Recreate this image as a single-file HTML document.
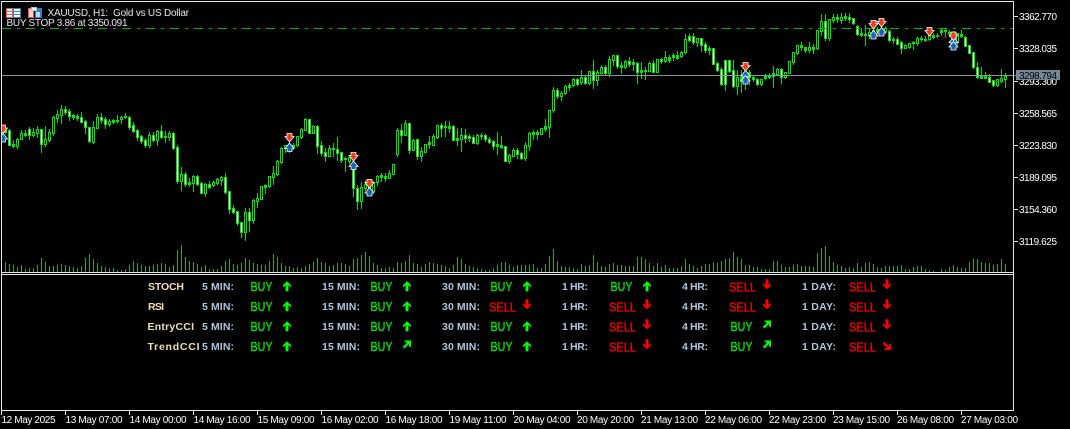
<!DOCTYPE html>
<html><head><meta charset="utf-8"><title>XAUUSD H1</title>
<style>html,body{margin:0;padding:0;background:#000;width:1070px;height:429px;overflow:hidden}svg{display:block}
text{font-family:"Liberation Sans",sans-serif}
.a{font-size:10px;fill:#fff}.l{font-size:10.5px;font-weight:bold;fill:#b0c4de}.n{font-size:10.5px;font-weight:bold;fill:#eedfb0}.b{font-size:13px;fill:#00ee00;stroke:#00ee00;stroke-width:.3px}.s{font-size:13px;fill:#f00;stroke:#f00;stroke-width:.3px}
</style></head><body>
<svg width="1070" height="429" viewBox="0 0 1070 429" xmlns="http://www.w3.org/2000/svg">
<defs>
<polygon id="u" fill="#00ff00" points="0,-5 4,-1 4,1 1.5,-1 1.5,5 -1.5,5 -1.5,-1 -4,1 -4,-1"/>
<polygon id="d" fill="#ff0000" points="0,5 4,1 4,-1 1.5,1 1.5,-5 -1.5,-5 -1.5,1 -4,-1 -4,1"/>
<polygon id="r" fill="#00ff00" points="-3,-4.5 4,-4.5 4,2.5 2,1 2,-1 -2.5,3.5 -4.2,1.8 0,-2 -1.5,-2.8"/>
<polygon id="e" fill="#ff0000" points="-3,4.5 4,4.5 4,-2.5 2,-1 2,1 -2.5,-3.5 -4.2,-1.8 0,2 -1.5,2.8"/>
<polygon id="R" fill="#e8401c" stroke="#fff" stroke-width=".8" points="-2.5,-4 2.5,-4 2.5,-1 4.5,-1 0,4.5 -4.5,-1 -2.5,-1"/>
<polygon id="B" fill="#1464b4" stroke="#fff" stroke-width=".8" points="-2.5,4 2.5,4 2.5,1 4.5,1 0,-4.5 -4.5,1 -2.5,1"/>
<clipPath id="c"><rect x="2" y="2" width="1011" height="270"/></clipPath>
</defs>
<rect width="1070" height="429" fill="#000"/>
<g clip-path="url(#c)">
<path shape-rendering="crispEdges" stroke="#2fa52f" stroke-width="1" fill="none" d="M5.5 262v10M9.5 264v8M13.5 265v7M17.5 267v5M21.5 265v7M25.5 269v3M29.5 268v4M33.5 268v4M37.5 265v7M41.5 258v14M45.5 262v10M49.5 266v6M53.5 266v6M57.5 265v7M61.5 264v8M65.5 265v7M69.5 266v6M73.5 267v5M77.5 268v4M81.5 266v6M85.5 258v14M89.5 254v18M93.5 259v13M97.5 263v9M101.5 266v6M105.5 267v5M109.5 268v4M113.5 268v4M117.5 270v2M121.5 270v2M125.5 269v3M129.5 265v7M133.5 261v11M137.5 263v9M141.5 265v7M145.5 266v6M149.5 266v6M153.5 265v7M157.5 264v8M161.5 263v9M165.5 264v8M169.5 267v5M173.5 265v7M177.5 250v22M181.5 245v27M185.5 257v15M189.5 261v11M193.5 262v10M197.5 264v8M201.5 267v5M205.5 265v7M209.5 269v3M213.5 269v3M217.5 269v3M221.5 266v6M225.5 261v11M229.5 259v13M233.5 264v8M237.5 265v7M241.5 263v9M245.5 258v14M249.5 260v12M253.5 263v9M257.5 264v8M261.5 265v7M265.5 265v7M269.5 261v11M273.5 254v18M277.5 257v15M281.5 263v9M285.5 266v6M289.5 266v6M293.5 268v4M297.5 267v5M301.5 268v4M305.5 266v6M309.5 264v8M313.5 262v10M317.5 258v14M321.5 262v10M325.5 263v9M329.5 266v6M333.5 265v7M337.5 263v9M341.5 263v9M345.5 264v8M349.5 266v6M353.5 259v13M357.5 258v14M361.5 255v17M365.5 252v20M369.5 256v16M373.5 263v9M377.5 265v7M381.5 268v4M385.5 268v4M389.5 267v5M393.5 268v4M397.5 262v10M401.5 263v9M405.5 261v11M409.5 255v17M413.5 263v9M417.5 264v8M421.5 267v5M425.5 264v8M429.5 262v10M433.5 263v9M437.5 264v8M441.5 265v7M445.5 266v6M449.5 268v4M453.5 265v7M457.5 257v15M461.5 259v13M465.5 264v8M469.5 266v6M473.5 267v5M477.5 268v4M481.5 269v3M485.5 270v2M489.5 270v2M493.5 268v4M497.5 265v7M501.5 262v10M505.5 262v10M509.5 265v7M513.5 267v5M517.5 265v7M521.5 265v7M525.5 265v7M529.5 265v7M533.5 264v8M537.5 268v4M541.5 268v4M545.5 264v8M549.5 256v16M553.5 249v23M557.5 261v11M561.5 266v6M565.5 267v5M569.5 267v5M573.5 268v4M577.5 269v3M581.5 264v8M585.5 266v6M589.5 265v7M593.5 255v17M597.5 262v10M601.5 266v6M605.5 267v5M609.5 264v8M613.5 263v9M617.5 265v7M621.5 265v7M625.5 266v6M629.5 266v6M633.5 266v6M637.5 257v15M641.5 257v15M645.5 259v13M649.5 263v9M653.5 266v6M657.5 263v9M661.5 267v5M665.5 265v7M669.5 268v4M673.5 268v4M677.5 268v4M681.5 266v6M685.5 259v13M689.5 264v8M693.5 266v6M697.5 268v4M701.5 266v6M705.5 264v8M709.5 264v8M713.5 262v10M717.5 263v9M721.5 261v11M725.5 259v13M729.5 258v14M733.5 252v20M737.5 257v15M741.5 259v13M745.5 265v7M749.5 265v7M753.5 267v5M757.5 267v5M761.5 269v3M765.5 269v3M769.5 269v3M773.5 261v11M777.5 261v11M781.5 265v7M785.5 267v5M789.5 267v5M793.5 265v7M797.5 264v8M801.5 266v6M805.5 266v6M809.5 266v6M813.5 267v5M817.5 253v19M821.5 248v24M825.5 246v26M829.5 256v16M833.5 262v10M837.5 265v7M841.5 266v6M845.5 268v4M849.5 267v5M853.5 268v4M857.5 263v9M861.5 267v5M865.5 263v9M869.5 262v10M873.5 264v8M877.5 267v5M881.5 268v4M885.5 266v6M889.5 266v6M893.5 266v6M897.5 266v6M901.5 265v7M905.5 269v3M909.5 269v3M913.5 267v5M917.5 266v6M921.5 266v6M925.5 269v3M929.5 270v2M933.5 271v1M941.5 269v3M945.5 270v2M949.5 267v5M953.5 265v7M957.5 267v5M961.5 268v4M965.5 268v4M969.5 262v10M973.5 259v13M977.5 259v13M981.5 262v10M985.5 263v9M989.5 263v9M993.5 265v7M997.5 264v8M1001.5 259v13M1005.5 264v8"/>
<path shape-rendering="crispEdges" stroke="#00dc00" stroke-width="1" fill="none" d="M5.5 127V134M9.5 129V146M13.5 140V148M17.5 138V149M21.5 130V140M25.5 130V137M29.5 127V140M33.5 128V137M37.5 126V138M41.5 129V153M45.5 126V147M49.5 129V142M53.5 116V136M57.5 110V123M61.5 105V124M65.5 106V115M69.5 109V121M73.5 114V120M77.5 114V121M81.5 112V123M85.5 120V134M89.5 127V143M93.5 121V144M97.5 114V129M101.5 113V124M105.5 117V129M109.5 119V127M113.5 119V124M117.5 115V124M121.5 116V124M125.5 113V119M129.5 116V130M133.5 122V133M137.5 129V141M141.5 135V144M145.5 138V148M149.5 132V148M153.5 132V142M157.5 130V146M161.5 125V139M165.5 131V143M169.5 131V141M173.5 132V150M177.5 145V184M181.5 167V191M185.5 172V187M189.5 178V187M193.5 175V192M197.5 175V186M201.5 182V194M205.5 183V197M209.5 181V189M213.5 181V187M217.5 178V185M221.5 176V186M225.5 173V194M229.5 191V214M233.5 205V214M237.5 211V226M241.5 222V238M245.5 208V241M249.5 208V232M253.5 199V224M257.5 193V208M261.5 186V200M265.5 184V194M269.5 176V188M273.5 166V185M277.5 160V176M281.5 147V164M285.5 145V153M289.5 144V153M293.5 143V150M297.5 136V147M301.5 128V139M305.5 118V131M309.5 119V134M313.5 125V134M317.5 125V154M321.5 141V156M325.5 148V162M329.5 145V157M333.5 143V157M337.5 137V161M341.5 152V163M345.5 157V172M349.5 157V164M353.5 160V197M357.5 185V210M361.5 182V209M365.5 180V191M369.5 182V192M373.5 181V193M377.5 175V186M381.5 173V182M385.5 173V182M389.5 170V179M393.5 164V175M397.5 128V157M401.5 124V143M405.5 120V136M409.5 123V154M413.5 139V151M417.5 139V160M421.5 147V162M425.5 144V153M429.5 136V149M433.5 134V146M437.5 125V139M441.5 123V137M445.5 121V137M449.5 121V133M453.5 125V141M457.5 128V146M461.5 128V152M465.5 129V143M469.5 134V142M473.5 135V144M477.5 134V145M481.5 133V140M485.5 134V142M489.5 137V144M493.5 140V150M497.5 132V155M501.5 136V149M505.5 146V162M509.5 154V164M513.5 148V157M517.5 148V159M521.5 152V160M525.5 142V161M529.5 132V151M533.5 130V140M537.5 130V140M541.5 128V135M545.5 119V132M549.5 110V138M553.5 87V113M557.5 88V99M561.5 91V101M565.5 85V95M569.5 83V91M573.5 78V87M577.5 78V86M581.5 70V85M585.5 76V85M589.5 71V85M593.5 60V89M597.5 70V86M601.5 65V75M605.5 65V76M609.5 56V77M613.5 55V66M617.5 55V69M621.5 62V74M625.5 60V69M629.5 57V67M633.5 59V71M637.5 62V84M641.5 62V79M645.5 67V80M649.5 62V72M653.5 60V73M657.5 59V73M661.5 58V64M665.5 51V63M669.5 55V63M673.5 53V61M677.5 51V60M681.5 51V58M685.5 34V54M689.5 34V42M693.5 33V45M697.5 38V47M701.5 38V52M705.5 42V53M709.5 46V55M713.5 48V65M717.5 62V72M721.5 67V86M725.5 60V91M729.5 60V73M733.5 60V88M737.5 70V95M741.5 70V93M745.5 70V90M749.5 70V85M753.5 75V82M757.5 78V86M761.5 79V86M765.5 74V80M769.5 73V79M773.5 66V88M777.5 68V76M781.5 68V84M785.5 72V79M789.5 61V74M793.5 52V65M797.5 45V55M801.5 42V51M805.5 47V53M809.5 42V53M813.5 44V54M817.5 30V50M821.5 14V36M825.5 14V41M829.5 19V41M833.5 14V23M837.5 14V23M841.5 13V24M845.5 13V21M849.5 13V23M853.5 18V25M857.5 25V36M861.5 28V37M865.5 25V46M869.5 28V39M873.5 28V37M877.5 27V34M881.5 27V36M885.5 26V33M889.5 30V42M893.5 37V44M897.5 37V45M901.5 41V54M905.5 44V49M909.5 43V49M913.5 41V50M917.5 37V46M921.5 36V42M925.5 36V42M929.5 32V41M933.5 33V39M937.5 33V38M941.5 28V36M945.5 28V36M949.5 30V37M953.5 31V40M957.5 33V45M961.5 30V38M965.5 36V47M969.5 45V54M973.5 52V69M977.5 62V79M981.5 67V79M985.5 72V79M989.5 74V83M993.5 80V87M997.5 79V87M1001.5 69V83M1005.5 73V88"/>
<path shape-rendering="crispEdges" stroke="#00e800" stroke-width="3" fill="none" d="M5.5 130V133M9.5 130V146M13.5 144V147M17.5 139V147M21.5 133V140M25.5 133V136M29.5 129V136M33.5 132V136M37.5 129V134M41.5 129V145M45.5 139V145M49.5 132V141M53.5 117V134M57.5 114V119M61.5 109V116M65.5 109V113M69.5 111V117M73.5 115V118M77.5 116V119M81.5 117V123M85.5 121V128M89.5 127V142M93.5 127V143M97.5 117V129M101.5 117V121M105.5 119V125M109.5 121V125M113.5 120V123M117.5 120V122M121.5 117V120M125.5 116V118M129.5 117V128M133.5 125V132M137.5 130V138M141.5 136V142M145.5 140V146M149.5 135V146M153.5 135V141M157.5 131V141M161.5 131V138M165.5 136V138M169.5 133V138M173.5 133V149M177.5 147V182M181.5 174V182M185.5 174V185M189.5 182V185M193.5 176V184M197.5 176V185M201.5 183V194M205.5 184V194M209.5 184V188M213.5 182V186M217.5 179V184M221.5 177V181M225.5 177V193M229.5 191V210M233.5 208V213M237.5 211V224M241.5 222V233M245.5 212V233M249.5 212V221M253.5 200V221M257.5 198V202M261.5 186V200M265.5 185V188M269.5 176V187M273.5 173V178M277.5 161V175M281.5 148V163M285.5 145V149M289.5 146V151M293.5 145V148M297.5 136V146M301.5 129V138M305.5 119V131M309.5 119V134M313.5 126V134M317.5 126V147M321.5 145V154M325.5 152V157M329.5 148V157M333.5 148V150M337.5 149V154M341.5 152V161M345.5 158V160M349.5 157V162M353.5 168V189M357.5 188V202M361.5 187V202M365.5 184V189M369.5 184V191M373.5 182V192M377.5 176V183M381.5 175V178M385.5 176V179M389.5 173V179M393.5 164V175M397.5 130V155M401.5 130V136M405.5 123V136M409.5 123V151M413.5 140V151M417.5 139V157M421.5 151V157M425.5 144V153M429.5 142V145M433.5 136V146M437.5 125V138M441.5 125V129M445.5 126V128M449.5 126V129M453.5 126V141M457.5 138V141M461.5 135V140M465.5 135V139M469.5 136V139M473.5 137V144M477.5 135V144M481.5 135V137M485.5 135V140M489.5 139V143M493.5 141V147M497.5 144V147M501.5 145V148M505.5 146V162M509.5 155V162M513.5 150V157M517.5 150V155M521.5 153V159M525.5 145V159M529.5 133V147M533.5 132V135M537.5 132V135M541.5 128V135M545.5 126V130M549.5 110V128M553.5 90V111M557.5 90V97M561.5 93V97M565.5 86V94M569.5 85V88M573.5 79V86M577.5 79V85M581.5 77V83M585.5 77V84M589.5 71V84M593.5 71V81M597.5 72V81M601.5 67V74M605.5 67V74M609.5 59V74M613.5 55V61M617.5 55V67M621.5 65V68M625.5 61V68M629.5 61V65M633.5 62V65M637.5 63V73M641.5 70V73M645.5 70V72M649.5 63V72M653.5 63V73M657.5 59V73M661.5 59V62M665.5 57V62M669.5 57V61M673.5 55V58M677.5 55V59M681.5 52V57M685.5 39V53M689.5 36V41M693.5 36V43M697.5 38V43M701.5 38V46M705.5 44V51M709.5 48V51M713.5 48V65M717.5 63V71M721.5 69V85M725.5 60V85M729.5 60V72M733.5 70V87M737.5 77V87M741.5 77V82M745.5 72V79M749.5 72V78M753.5 77V80M757.5 79V85M761.5 79V85M765.5 76V79M769.5 75V78M773.5 73V77M777.5 69V75M781.5 69V78M785.5 72V78M789.5 61V74M793.5 52V63M797.5 45V54M801.5 45V48M805.5 47V51M809.5 47V51M813.5 47V50M817.5 30V49M821.5 21V32M825.5 21V39M829.5 19V39M833.5 17V21M837.5 17V20M841.5 17V21M845.5 16V19M849.5 17V20M853.5 18V24M857.5 26V35M861.5 33V36M865.5 34V36M869.5 32V36M873.5 30V35M877.5 29V32M881.5 30V34M885.5 28V32M889.5 31V41M893.5 39V41M897.5 39V45M901.5 42V49M905.5 45V49M909.5 43V48M913.5 42V44M917.5 38V44M921.5 38V40M925.5 39V41M929.5 35V40M933.5 35V38M937.5 35V37M941.5 30V33M945.5 30V32M949.5 32V34M953.5 33V37M957.5 33V43M961.5 34V37M965.5 37V47M969.5 45V54M973.5 52V68M977.5 67V78M981.5 76V79M985.5 76V79M989.5 77V83M993.5 80V86M997.5 79V86M1001.5 78V82M1005.5 76V80"/>
<path shape-rendering="crispEdges" stroke="#fff" stroke-width="1" fill="none" d="M9.5 131V145M29.5 130V135M41.5 130V144M65.5 110V112M69.5 112V116M81.5 118V122M85.5 122V127M89.5 128V141M101.5 118V120M105.5 120V124M129.5 118V127M133.5 126V131M137.5 131V137M141.5 137V141M145.5 141V145M153.5 136V140M161.5 132V137M173.5 134V148M177.5 148V181M185.5 175V184M197.5 177V184M201.5 184V193M209.5 185V187M225.5 178V192M229.5 192V209M233.5 209V212M237.5 212V223M241.5 223V232M249.5 213V220M309.5 120V133M317.5 127V146M321.5 146V153M325.5 153V156M337.5 150V153M341.5 153V160M353.5 169V188M357.5 189V201M401.5 131V135M409.5 124V150M417.5 140V156M441.5 126V128M453.5 127V140M465.5 136V138M469.5 137V138M473.5 138V143M485.5 136V139M489.5 140V142M493.5 142V146M505.5 147V161M517.5 151V154M521.5 154V158M557.5 91V96M577.5 80V84M585.5 78V83M593.5 72V80M605.5 68V73M617.5 56V66M629.5 62V64M637.5 64V72M653.5 64V72M661.5 60V61M689.5 37V40M693.5 37V42M701.5 39V45M705.5 45V50M713.5 49V64M717.5 64V70M721.5 70V84M725.5 61V84M729.5 61V71M733.5 71V86M757.5 80V84M781.5 70V77M825.5 22V38M849.5 18V19M853.5 19V23M857.5 27V34M889.5 32V40M897.5 40V44M901.5 43V48M965.5 38V46M969.5 46V53M973.5 53V67M977.5 68V77M989.5 78V82M993.5 81V85"/>
<path shape-rendering="crispEdges" stroke="#000" stroke-width="1" fill="none" d="M17.5 140V146M21.5 134V139M33.5 133V135M37.5 130V133M45.5 140V144M49.5 133V140M53.5 118V133M57.5 115V118M61.5 110V115M93.5 128V142M97.5 118V128M109.5 122V124M121.5 118V119M149.5 136V145M157.5 132V140M169.5 134V137M181.5 175V181M193.5 177V183M205.5 185V193M213.5 183V185M217.5 180V183M221.5 178V180M245.5 213V232M253.5 201V220M257.5 199V201M261.5 187V199M269.5 177V186M273.5 174V177M277.5 162V174M281.5 149V162M285.5 146V148M297.5 137V145M301.5 130V137M305.5 120V130M313.5 127V133M329.5 149V156M349.5 158V161M361.5 188V201M365.5 185V188M373.5 183V191M377.5 177V182M389.5 174V178M393.5 165V174M397.5 131V154M405.5 124V135M413.5 141V150M421.5 152V156M425.5 145V152M433.5 137V145M437.5 126V137M461.5 136V139M477.5 136V143M509.5 156V161M513.5 151V156M525.5 146V158M529.5 134V146M541.5 129V134M549.5 111V127M553.5 91V110M561.5 94V96M565.5 87V93M573.5 80V85M581.5 78V82M589.5 72V83M597.5 73V80M601.5 68V73M609.5 60V73M613.5 56V60M625.5 62V67M649.5 64V71M657.5 60V72M665.5 58V61M681.5 53V56M685.5 40V52M697.5 39V42M737.5 78V86M761.5 80V84M777.5 70V74M785.5 73V77M789.5 62V73M793.5 53V62M797.5 46V53M809.5 48V50M817.5 31V48M821.5 22V31M829.5 20V38M833.5 18V20M841.5 18V20M869.5 33V35M873.5 31V34M881.5 31V33M885.5 29V31M905.5 46V48M909.5 44V47M917.5 39V43M929.5 36V39M957.5 34V42M997.5 80V85M1001.5 79V81M1005.5 77V79"/>
</g>
<line x1="2" y1="28.5" x2="1013" y2="28.5" stroke="#00b800" stroke-width="1" stroke-dasharray="9 6 3 6" shape-rendering="crispEdges"/>
<line x1="2" y1="75.5" x2="1016" y2="75.5" stroke="#8894a4" stroke-width="1" shape-rendering="crispEdges"/>
<path d="M930 36h3m3 0h4m4 1h3" stroke="#e03020" stroke-width="1" fill="none"/>
<g clip-path="url(#c)">
<use href="#R" x="3" y="129"/><use href="#B" x="3" y="138"/>
<use href="#R" x="289.5" y="137.5"/><use href="#B" x="289.5" y="147.5"/>
<use href="#R" x="353.5" y="156.5"/><use href="#B" x="353.5" y="165.5"/>
<use href="#R" x="369.5" y="183.5"/><use href="#B" x="369.5" y="192"/>
<use href="#R" x="745.5" y="66.5"/><use href="#B" x="745.5" y="75"/><use href="#B" x="745.5" y="80"/>
<use href="#R" x="873.5" y="24.5"/><use href="#B" x="873.5" y="35"/>
<use href="#R" x="881.5" y="22.5"/><use href="#B" x="881.5" y="32"/>
<use href="#R" x="929.5" y="31.5"/>
<use href="#B" x="953.5" y="41.5"/><use href="#B" x="953.5" y="46"/><use href="#R" x="953.5" y="36"/>
</g>
<g shape-rendering="crispEdges" fill="#e6e6e6">
<rect x="1" y="1" width="1013" height="1"/>
<rect x="1" y="1" width="1" height="410"/>
<rect x="1013" y="1" width="1" height="410"/>
<rect x="1" y="410" width="1013" height="1"/>
<rect x="1" y="272" width="1013" height="1"/>
<rect x="1" y="274" width="1013" height="1"/>
<rect x="1014" y="16" width="4" height="1"/><rect x="1014" y="48" width="4" height="1"/><rect x="1014" y="81" width="4" height="1"/><rect x="1014" y="113" width="4" height="1"/><rect x="1014" y="145" width="4" height="1"/><rect x="1014" y="177" width="4" height="1"/><rect x="1014" y="209" width="4" height="1"/><rect x="1014" y="241" width="4" height="1"/>
<rect x="1" y="411" width="1" height="4"/><rect x="65" y="411" width="1" height="4"/><rect x="129" y="411" width="1" height="4"/><rect x="193" y="411" width="1" height="4"/><rect x="257" y="411" width="1" height="4"/><rect x="321" y="411" width="1" height="4"/><rect x="385" y="411" width="1" height="4"/><rect x="449" y="411" width="1" height="4"/><rect x="513" y="411" width="1" height="4"/><rect x="577" y="411" width="1" height="4"/><rect x="641" y="411" width="1" height="4"/><rect x="705" y="411" width="1" height="4"/><rect x="769" y="411" width="1" height="4"/><rect x="833" y="411" width="1" height="4"/><rect x="897" y="411" width="1" height="4"/><rect x="961" y="411" width="1" height="4"/>
</g>
<g shape-rendering="crispEdges">
<rect x="6" y="8" width="15" height="10" fill="#fff"/>
<rect x="6" y="8" width="7" height="10" fill="#e85a50"/><rect x="13" y="8" width="8" height="10" fill="#2f80c8"/>
<rect x="7" y="9" width="5" height="2" fill="#fff"/><rect x="7" y="12" width="5" height="2" fill="#fff"/><rect x="7" y="15" width="5" height="2" fill="#fff"/>
<rect x="14" y="9" width="6" height="2" fill="#fff"/><rect x="14" y="12" width="6" height="2" fill="#fff"/><rect x="14" y="15" width="6" height="2" fill="#fff"/>
<rect x="28" y="8" width="6" height="10" fill="#e85a50"/><rect x="29" y="9" width="4" height="8" fill="#ffd0c8"/>
<rect x="35" y="8" width="7" height="10" fill="#2f80c8"/><rect x="36" y="12" width="4" height="5" fill="#b8daf5"/>
<rect x="31" y="7" width="6" height="4" fill="#c0c0c0"/><rect x="32" y="8" width="4" height="2" fill="#fff"/>
</g>
<text x="47.5" y="16" font-size="10" fill="#e6e6e6" textLength="141.5" lengthAdjust="spacing" xml:space="preserve">XAUUSD, H1:  Gold vs US Dollar</text>
<text x="6.5" y="26" font-size="10" fill="#e6e6e6" textLength="121" lengthAdjust="spacing">BUY STOP 3.86 at 3350.091</text>
<g class="a">
<text class="a" x="1019" y="20" textLength="38">3362.770</text>
<text class="a" x="1019" y="52" textLength="38">3328.035</text>
<text class="a" x="1019" y="85" textLength="38">3293.300</text>
<text class="a" x="1019" y="117" textLength="38">3258.565</text>
<text class="a" x="1019" y="149" textLength="38">3223.830</text>
<text class="a" x="1019" y="181" textLength="38">3189.095</text>
<text class="a" x="1019" y="213" textLength="38">3154.360</text>
<text class="a" x="1019" y="245" textLength="38">3119.625</text>
</g>
<rect x="1016" y="70" width="44" height="10" fill="#778899" shape-rendering="crispEdges"/>
<text x="1019" y="79" font-size="10" fill="#000" textLength="38">3298.794</text>
<g class="a">
<text class="a" x="1.5" y="423" textLength="54">12 May 2025</text>
<text class="a" x="65.5" y="423" textLength="57">13 May 07:00</text>
<text class="a" x="129.5" y="423" textLength="57">14 May 00:00</text>
<text class="a" x="193.5" y="423" textLength="57">14 May 16:00</text>
<text class="a" x="257.5" y="423" textLength="57">15 May 09:00</text>
<text class="a" x="321.5" y="423" textLength="57">16 May 02:00</text>
<text class="a" x="385.5" y="423" textLength="57">16 May 18:00</text>
<text class="a" x="449.5" y="423" textLength="57">19 May 11:00</text>
<text class="a" x="513.5" y="423" textLength="57">20 May 04:00</text>
<text class="a" x="577" y="423" textLength="57">20 May 20:00</text>
<text class="a" x="641" y="423" textLength="57">21 May 13:00</text>
<text class="a" x="705" y="423" textLength="57">22 May 06:00</text>
<text class="a" x="769" y="423" textLength="57">22 May 23:00</text>
<text class="a" x="833" y="423" textLength="57">23 May 15:00</text>
<text class="a" x="897" y="423" textLength="57">26 May 08:00</text>
<text class="a" x="961" y="423" textLength="57">27 May 03:00</text>
</g>
<text class="n" x="148" y="290" textLength="36">STOCH</text>
<text class="n" x="148" y="310" textLength="16">RSI</text>
<text class="n" x="147.5" y="330" textLength="46.5">EntryCCI</text>
<text class="n" x="147.5" y="350" textLength="52">TrendCCI</text>

<text class="l" x="202" y="290" textLength="32">5 MIN:</text><text class="l" x="322" y="290" textLength="38">15 MIN:</text><text class="l" x="442" y="290" textLength="38">30 MIN:</text><text class="l" x="562" y="290" textLength="26">1 HR:</text><text class="l" x="682" y="290" textLength="26">4 HR:</text><text class="l" x="802" y="290" textLength="34">1 DAY:</text>
<text class="l" x="202" y="310" textLength="32">5 MIN:</text><text class="l" x="322" y="310" textLength="38">15 MIN:</text><text class="l" x="442" y="310" textLength="38">30 MIN:</text><text class="l" x="562" y="310" textLength="26">1 HR:</text><text class="l" x="682" y="310" textLength="26">4 HR:</text><text class="l" x="802" y="310" textLength="34">1 DAY:</text>
<text class="l" x="202" y="330" textLength="32">5 MIN:</text><text class="l" x="322" y="330" textLength="38">15 MIN:</text><text class="l" x="442" y="330" textLength="38">30 MIN:</text><text class="l" x="562" y="330" textLength="26">1 HR:</text><text class="l" x="682" y="330" textLength="26">4 HR:</text><text class="l" x="802" y="330" textLength="34">1 DAY:</text>
<text class="l" x="202" y="350" textLength="32">5 MIN:</text><text class="l" x="322" y="350" textLength="38">15 MIN:</text><text class="l" x="442" y="350" textLength="38">30 MIN:</text><text class="l" x="562" y="350" textLength="26">1 HR:</text><text class="l" x="682" y="350" textLength="26">4 HR:</text><text class="l" x="802" y="350" textLength="34">1 DAY:</text>

<text class="b" x="250.5" y="291" textLength="22" lengthAdjust="spacingAndGlyphs">BUY</text><use href="#u" x="287" y="286.3"/>
<text class="b" x="370.5" y="291" textLength="22" lengthAdjust="spacingAndGlyphs">BUY</text><use href="#u" x="407" y="286.3"/>
<text class="b" x="490.5" y="291" textLength="22" lengthAdjust="spacingAndGlyphs">BUY</text><use href="#u" x="527" y="286.3"/>
<text class="b" x="610.5" y="291" textLength="22" lengthAdjust="spacingAndGlyphs">BUY</text><use href="#u" x="647" y="286.3"/>
<text class="s" x="729" y="291.5" textLength="27" lengthAdjust="spacingAndGlyphs">SELL</text><use href="#d" x="767" y="284.3"/>
<text class="s" x="849" y="291.5" textLength="27" lengthAdjust="spacingAndGlyphs">SELL</text><use href="#d" x="887" y="284.3"/>

<text class="b" x="250.5" y="311" textLength="22" lengthAdjust="spacingAndGlyphs">BUY</text><use href="#u" x="287" y="306.3"/>
<text class="b" x="370.5" y="311" textLength="22" lengthAdjust="spacingAndGlyphs">BUY</text><use href="#u" x="407" y="306.3"/>
<text class="s" x="489" y="311.5" textLength="27" lengthAdjust="spacingAndGlyphs">SELL</text><use href="#d" x="527" y="304.3"/>
<text class="s" x="609" y="311.5" textLength="27" lengthAdjust="spacingAndGlyphs">SELL</text><use href="#d" x="647" y="304.3"/>
<text class="s" x="729" y="311.5" textLength="27" lengthAdjust="spacingAndGlyphs">SELL</text><use href="#d" x="767" y="304.3"/>
<text class="s" x="849" y="311.5" textLength="27" lengthAdjust="spacingAndGlyphs">SELL</text><use href="#d" x="887" y="304.3"/>

<text class="b" x="250.5" y="331" textLength="22" lengthAdjust="spacingAndGlyphs">BUY</text><use href="#u" x="287" y="326.3"/>
<text class="b" x="370.5" y="331" textLength="22" lengthAdjust="spacingAndGlyphs">BUY</text><use href="#u" x="407" y="326.3"/>
<text class="b" x="490.5" y="331" textLength="22" lengthAdjust="spacingAndGlyphs">BUY</text><use href="#u" x="527" y="326.3"/>
<text class="s" x="609" y="331.5" textLength="27" lengthAdjust="spacingAndGlyphs">SELL</text><use href="#d" x="647" y="324.3"/>
<text class="b" x="730.5" y="331" textLength="22" lengthAdjust="spacingAndGlyphs">BUY</text><use href="#r" x="767" y="325"/>
<text class="s" x="849" y="331.5" textLength="27" lengthAdjust="spacingAndGlyphs">SELL</text><use href="#d" x="887" y="324.3"/>

<text class="b" x="250.5" y="351" textLength="22" lengthAdjust="spacingAndGlyphs">BUY</text><use href="#u" x="287" y="346.3"/>
<text class="b" x="370.5" y="351" textLength="22" lengthAdjust="spacingAndGlyphs">BUY</text><use href="#r" x="407" y="345"/>
<text class="b" x="490.5" y="351" textLength="22" lengthAdjust="spacingAndGlyphs">BUY</text><use href="#u" x="527" y="346.3"/>
<text class="s" x="609" y="351.5" textLength="27" lengthAdjust="spacingAndGlyphs">SELL</text><use href="#d" x="647" y="344.3"/>
<text class="b" x="730.5" y="351" textLength="22" lengthAdjust="spacingAndGlyphs">BUY</text><use href="#r" x="767" y="345"/>
<text class="s" x="849" y="351.5" textLength="27" lengthAdjust="spacingAndGlyphs">SELL</text><use href="#e" x="887" y="345.5"/>
</svg>
</body></html>
